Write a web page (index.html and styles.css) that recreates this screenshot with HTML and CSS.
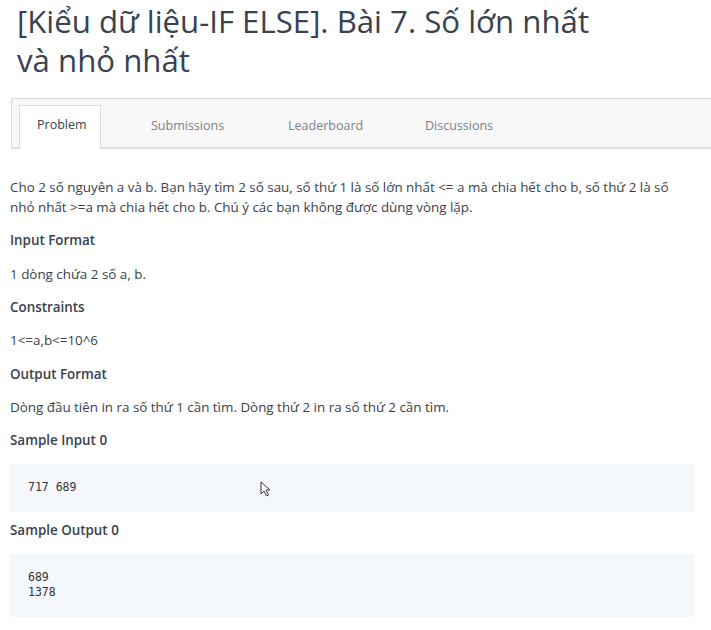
FILE: index.html
```html
<!DOCTYPE html>
<html lang="vi">
<head>
<meta charset="utf-8">
<link rel="stylesheet" href="styles.css">
</head>
<body>
<div class="page">
  <h1 class="title">[Kiểu dữ liệu-IF ELSE]. Bài 7. Số lớn nhất<br>và nhỏ nhất</h1>
  <div class="tabs">
    <div class="tab active">Problem</div>
    <div class="tab">Submissions</div>
    <div class="tab">Leaderboard</div>
    <div class="tab">Discussions</div>
  </div>
  <div class="content">
    <p class="text">Cho 2 số nguyên a và b. Bạn hãy tìm 2 số sau, số thứ 1 là số lớn nhất &lt;= a mà chia hết cho b, số thứ 2 là số nhỏ nhất &gt;=a mà chia hết cho b. Chú ý các bạn không được dùng vòng lặp.</p>
    <h3 class="head">Input Format</h3>
    <p class="text">1 dòng chứa 2 số a, b.</p>
    <h3 class="head">Constraints</h3>
    <p class="text">1&lt;=a,b&lt;=10^6</p>
    <h3 class="head">Output Format</h3>
    <p class="text">Dòng đầu tiên in ra số thứ 1 cần tìm. Dòng thứ 2 in ra số thứ 2 cần tìm.</p>
    <h3 class="head sample">Sample Input 0</h3>
    <div class="code-wrap">
      <pre class="code">717 689</pre>
      <svg class="cursor" width="11" height="16" viewBox="0 0 11 16"><path d="M1 1 L1 13 L4 10 L6.5 15 L8.5 14 L6 9 L10 9 Z" fill="#fff" stroke="#333" stroke-width="1"/></svg>
    </div>
    <h3 class="head sample">Sample Output 0</h3>
    <div class="code-wrap">
      <pre class="code">689
1378</pre>
    </div>
  </div>
</div>
</body>
</html>
```
FILE: styles.css
```css
html, body {
  margin: 0;
  padding: 0;
  background: #fff;
}
body {
  font-family: "Open Sans", "Noto Sans", sans-serif;
  color: #39424e;
}
.page {
  padding: 0 0 0 10px;
}
.title {
  margin: 0;
  padding: 2px 0 0 7px;
  font-size: 31.2px;
  font-weight: 400;
  line-height: 39px;
  color: #39424e;
}
.tabs {
  margin-top: 18px;
  margin-left: 1px;
  display: flex;
  align-items: flex-end;
  height: 51px;
  background: #f8f8f9;
  border-top: 1px solid #dcdcdc;
  border-left: 1px solid #dcdcdc;
  border-bottom: 2px solid #dedede;
  padding-left: 7px;
  box-sizing: border-box;
}
.tab {
  height: 42px;
  line-height: 38px;
  font-size: 12.5px;
  color: #7b7f85;
  padding: 0 18px;
  width: 137px;
  box-sizing: border-box;
  margin-bottom: -2px;
}
.tab.active {
  width: 82px;
  background: #fff;
  color: #39424e;
  border: 1px solid #dcdcdc;
  border-bottom: none;
  height: 44px;
  margin-right: 32px;
  padding-left: 17px;
}
.content {
  padding-top: 28px;
  padding-right: 17px;
}
.text {
  margin: 0 0 13.33px;
  font-size: 13.4px;
  line-height: 20px;
  color: #3a424c;
}
.head {
  margin: 0 0 13.33px;
  font-size: 13.4px;
  line-height: 20px;
  font-weight: 600;
  color: #39424e;
}
.head.sample {
  margin-bottom: 14px;
}
.code-wrap {
  position: relative;
  background: #f4f7fc;
  margin: 0 0 8px;
  padding: 16px 18px 17px;
}
.code {
  margin: 0;
  font-family: "DejaVu Sans Mono", "Liberation Mono", monospace;
  font-size: 11.5px;
  line-height: 15px;
  color: #333;
}
.cursor {
  position: absolute;
  left: 250px;
  top: 17px;
}
```
